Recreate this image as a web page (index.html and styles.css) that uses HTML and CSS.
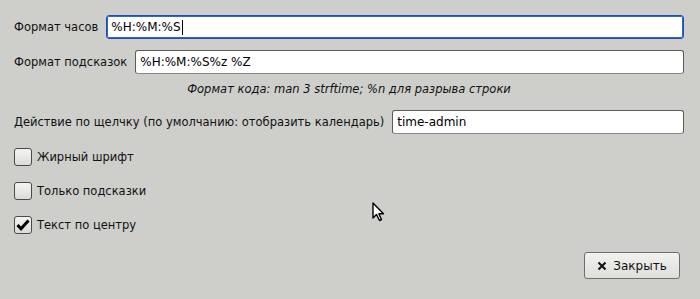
FILE: index.html
```html
<!DOCTYPE html>
<html>
<head>
    <meta charset="utf-8">
    <title>Настройки часов</title>
    <link rel="stylesheet" href="styles.css">
</head>
<body>
    <div class="panel">
        <!-- Clock format -->
        <div class="row">
            <label class="label" for="clock-format">Формат часов</label>
            <div class="field focused">
                <span class="value">%H:%M:%S</span><span class="caret"></span>
            </div>
        </div>

        <!-- Tooltip format -->
        <div class="row row-tip">
            <label class="label" for="tip-format">Формат подсказок</label>
            <div class="field">
                <span class="value">%H:%M:%S%z %Z</span>
            </div>
        </div>

        <div class="hint">Формат кода: man 3 strftime; %n для разрыва строки</div>

        <!-- Click action -->
        <div class="row row-action">
            <label class="label">Действие по щелчку (по умолчанию: отобразить календарь)</label>
            <div class="field">
                <span class="value">time-admin</span>
            </div>
        </div>

        <div class="checks">
            <div class="check">
                <span class="box"></span>
                <span>Жирный шрифт</span>
            </div>
            <div class="check">
                <span class="box"></span>
                <span>Только подсказки</span>
            </div>
            <div class="check">
                <span class="box checked">
                    <svg width="14" height="12" viewBox="0 0 14 12">
                        <path d="M1.5 6 L5 9.8 L12.5 1.5" fill="none" stroke="#000" stroke-width="3" stroke-linejoin="miter"/>
                    </svg>
                </span>
                <span>Текст по центру</span>
            </div>
        </div>

        <div class="buttons">
            <button class="btn">
                <svg width="10" height="10" viewBox="0 0 10 10">
                    <path d="M1.5 1.5 L8.5 8.5 M8.5 1.5 L1.5 8.5" stroke="#111" stroke-width="2"/>
                </svg>
                Закрыть
            </button>
        </div>

        <!-- mouse pointer that was in the screenshot -->
        <svg class="pointer" width="14" height="20" viewBox="0 0 14 20">
            <path d="M1 1 L1 16 L4.5 12.5 L7.5 18.5 L9.5 17.5 L6.8 11.8 L11.5 11.8 Z" fill="#fff" stroke="#000" stroke-width="1.4" stroke-linejoin="round"/>
        </svg>
    </div>
</body>
</html>
```

FILE: styles.css
```css
/* Dialog background */
body {
    margin: 0;
    background-color: #cecfcb;
    font-family: "DejaVu Sans", "Liberation Sans", sans-serif;
    font-size: 11.5px;
    color: #111;
}

.panel {
    position: relative;
    padding: 15px 16px 0 14px;
}

/* Label + entry rows */
.row {
    display: flex;
    align-items: center;
    gap: 8px;
    height: 24px;
    margin-bottom: 11px;
}

.label {
    white-space: nowrap;
}

.field {
    flex: 1;
    height: 24px;
    box-sizing: border-box;
    display: flex;
    align-items: center;
    padding: 0 4px;
    background-color: #fff;
    border: 1px solid #5c5c5c;
    border-bottom-color: #8a8a8a;
    border-radius: 3px;
    color: #000;
    font-size: 12px;
}

.focused {
    border: 1px solid #1b4fb6;
    box-shadow: 0 0 0 1px #2f66c8 inset;
}

.caret {
    display: inline-block;
    width: 1px;
    height: 15px;
    background-color: #000;
    margin-left: 1px;
}

.row-tip {
    margin-bottom: 6px;
}

/* Format hint */
.hint {
    font-style: italic;
    text-align: center;
    line-height: 18px;
    margin-bottom: 12px;
}

.row-action {
    margin-bottom: 14px;
}

/* Check buttons */
.checks {
    display: flex;
    flex-direction: column;
    gap: 16px;
}

.check {
    display: flex;
    align-items: center;
    gap: 5px;
    height: 18px;
}

.box {
    width: 18px;
    height: 18px;
    box-sizing: border-box;
    border: 1px solid #4a4a4a;
    border-radius: 3px;
    background: linear-gradient(#f4f4f2, #dcdcd8);
    display: flex;
    align-items: center;
    justify-content: center;
}

/* Bottom button */
.buttons {
    display: flex;
    justify-content: flex-end;
    margin-top: 18px;
    margin-right: 4px;
}

.btn {
    width: 96px;
    height: 27px;
    display: flex;
    align-items: center;
    justify-content: center;
    gap: 6px;
    font-family: inherit;
    font-size: 12px;
    color: #111;
    background: linear-gradient(#f2f2f0, #dededa);
    border: 1px solid #6e6e6e;
    border-radius: 3px;
    padding: 0;
}

.pointer {
    position: absolute;
    left: 372px;
    top: 202px;
}
```
